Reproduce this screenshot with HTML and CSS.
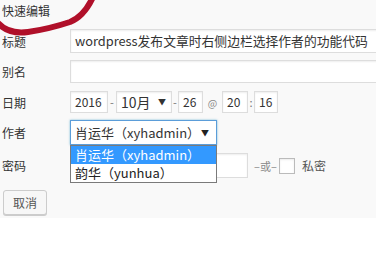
FILE: index.html
```html
<!DOCTYPE html>
<html>
<head>
    <title>快速编辑</title>
    <link rel="stylesheet" href="styles.css">
</head>
<body>
    <div class="quick-edit">
        <h2 class="title">快速编辑</h2>

        <div class="row row-title">
            <label>标题</label>
            <div class="box wide">wordpress发布文章时右侧边栏选择作者的功能代码</div>
        </div>

        <div class="row row-slug">
            <label>别名</label>
            <div class="box wide"></div>
        </div>

        <div class="row row-date">
            <label>日期</label>
            <div class="box year">2016</div>
            <span class="sep sep-dash">-</span>
            <div class="box month">10月 <span class="arrow">▼</span></div>
            <span class="sep sep-dash2">-</span>
            <div class="box day">26</div>
            <span class="sep sep-at">@</span>
            <div class="box hour">20</div>
            <span class="sep sep-colon">:</span>
            <div class="box minute">16</div>
        </div>

        <div class="row row-author">
            <label>作者</label>
            <div class="author-select">
                <span>肖运华（xyhadmin）</span>
                <span class="arrow">▼</span>
                <ul class="author-list">
                    <li class="selected">肖运华（xyhadmin）</li>
                    <li>韵华（yunhua）</li>
                </ul>
            </div>
        </div>

        <div class="row row-password">
            <label>密码</label>
            <div class="box password"></div>
            <span class="or">–或–</span>
            <span class="checkbox"></span>
            <span class="private">私密</span>
        </div>

        <button class="cancel">取消</button>

        <svg class="marker" width="100" height="40" viewBox="0 0 100 40">
            <path class="stroke" d="M -3 22 C 4 30, 14 34, 28 32 C 42 30, 55 27, 70 22 C 80 18, 87 10, 93 -3"/>
        </svg>
    </div>
</body>
</html>
```

FILE: styles.css
```css
body {
    margin: 0;
    font-family: "Noto Sans CJK SC", "Noto Sans", sans-serif;
    background: #fff;
    overflow: hidden;
    color: #333;
}
.quick-edit {
    position: relative;
    height: 218px;
    padding: 0 0 0 2px;
    box-sizing: border-box;
    background: #f9f9f9;
}
.title {
    margin: 0;
    height: 29px;
    font-size: 12px;
    line-height: 22px;
    font-weight: normal;
    color: #333;
}
.row {
    display: flex;
    align-items: center;
    white-space: nowrap;
}
.row label {
    width: 68px;
    flex-shrink: 0;
    font-size: 12px;
    color: #333;
}
.box {
    background: #fff;
    border: 1px solid #ddd;
    box-shadow: inset 0 1px 2px rgba(0, 0, 0, 0.07);
    box-sizing: border-box;
    flex-shrink: 0;
}
.row-title {
    height: 24px;
    margin-bottom: 7px;
}
.row-title .wide {
    width: 320px;
    height: 24px;
    padding-left: 4px;
    font-size: 12.8px;
    line-height: 22px;
    color: #333;
}
.row-slug {
    height: 23px;
    margin-bottom: 8px;
}
.row-slug .wide {
    width: 320px;
    height: 23px;
}
.row-date {
    height: 22px;
    margin-bottom: 7px;
    font-size: 12px;
}
.row-date .box {
    height: 22px;
    line-height: 20px;
    padding-left: 4px;
    color: #333;
}
.year { width: 38px; }
.month {
    width: 56px;
    font-size: 14px;
    display: flex;
    justify-content: space-between;
    padding-right: 5px;
}
.month .arrow {
    font-size: 8px;
    color: #333;
}
.day { width: 25px; }
.hour { width: 26px; }
.minute { width: 24px; }
.sep {
    text-align: center;
    color: #777;
    font-size: 11px;
}
.sep-dash { width: 8px; }
.sep-dash2 { width: 6px; }
.sep-at { width: 19px; font-size: 10px; color: #888; }
.sep-colon { width: 6px; }
.row-author {
    height: 25px;
    margin-bottom: 8px;
}
.author-select {
    position: relative;
    width: 147px;
    height: 25px;
    box-sizing: border-box;
    border: 1px solid #5b9dd9;
    box-shadow: 0 0 2px rgba(30, 140, 190, 0.6);
    background: #fff;
    display: flex;
    align-items: center;
    justify-content: space-between;
    padding: 0 7px 0 4px;
    font-size: 13px;
    z-index: 2;
}
.author-select .arrow {
    font-size: 8px;
    color: #222;
}
.author-list {
    position: absolute;
    top: 24px;
    left: -1px;
    width: 147px;
    margin: 0;
    padding: 0;
    list-style: none;
    background: #fff;
    border: 1px solid #7a7a7a;
    box-sizing: border-box;
}
.author-list li {
    height: 18px;
    line-height: 18px;
    padding-left: 4px;
    font-size: 13px;
    color: #222;
}
.author-list li.selected {
    background: #3399ff;
    color: #fff;
}
.row-password {
    height: 25px;
    margin-bottom: 12px;
    font-size: 12px;
}
.password {
    width: 178px;
    height: 25px;
}
.or {
    width: 31px;
    font-size: 11px;
    color: #888;
    padding-left: 6px;
    box-sizing: border-box;
}
.checkbox {
    width: 16px;
    height: 16px;
    box-sizing: border-box;
    border: 1px solid #bbb;
    background: #fff;
    box-shadow: inset 0 1px 2px rgba(0, 0, 0, 0.08);
}
.private {
    margin-left: 7px;
    color: #555;
}
.cancel {
    display: block;
    margin-left: 1px;
    width: 44px;
    height: 25px;
    padding: 0;
    font-family: inherit;
    font-size: 12px;
    color: #555;
    background: #f7f7f7;
    border: 1px solid #ccc;
    border-radius: 3px;
    box-shadow: 0 1px 0 #ccc;
}
.marker {
    position: absolute;
    top: 0;
    left: 0;
    z-index: 5;
    overflow: visible;
}
.marker .stroke {
    fill: none;
    stroke: #b0102a;
    stroke-width: 6px;
    stroke-linecap: round;
}
```
